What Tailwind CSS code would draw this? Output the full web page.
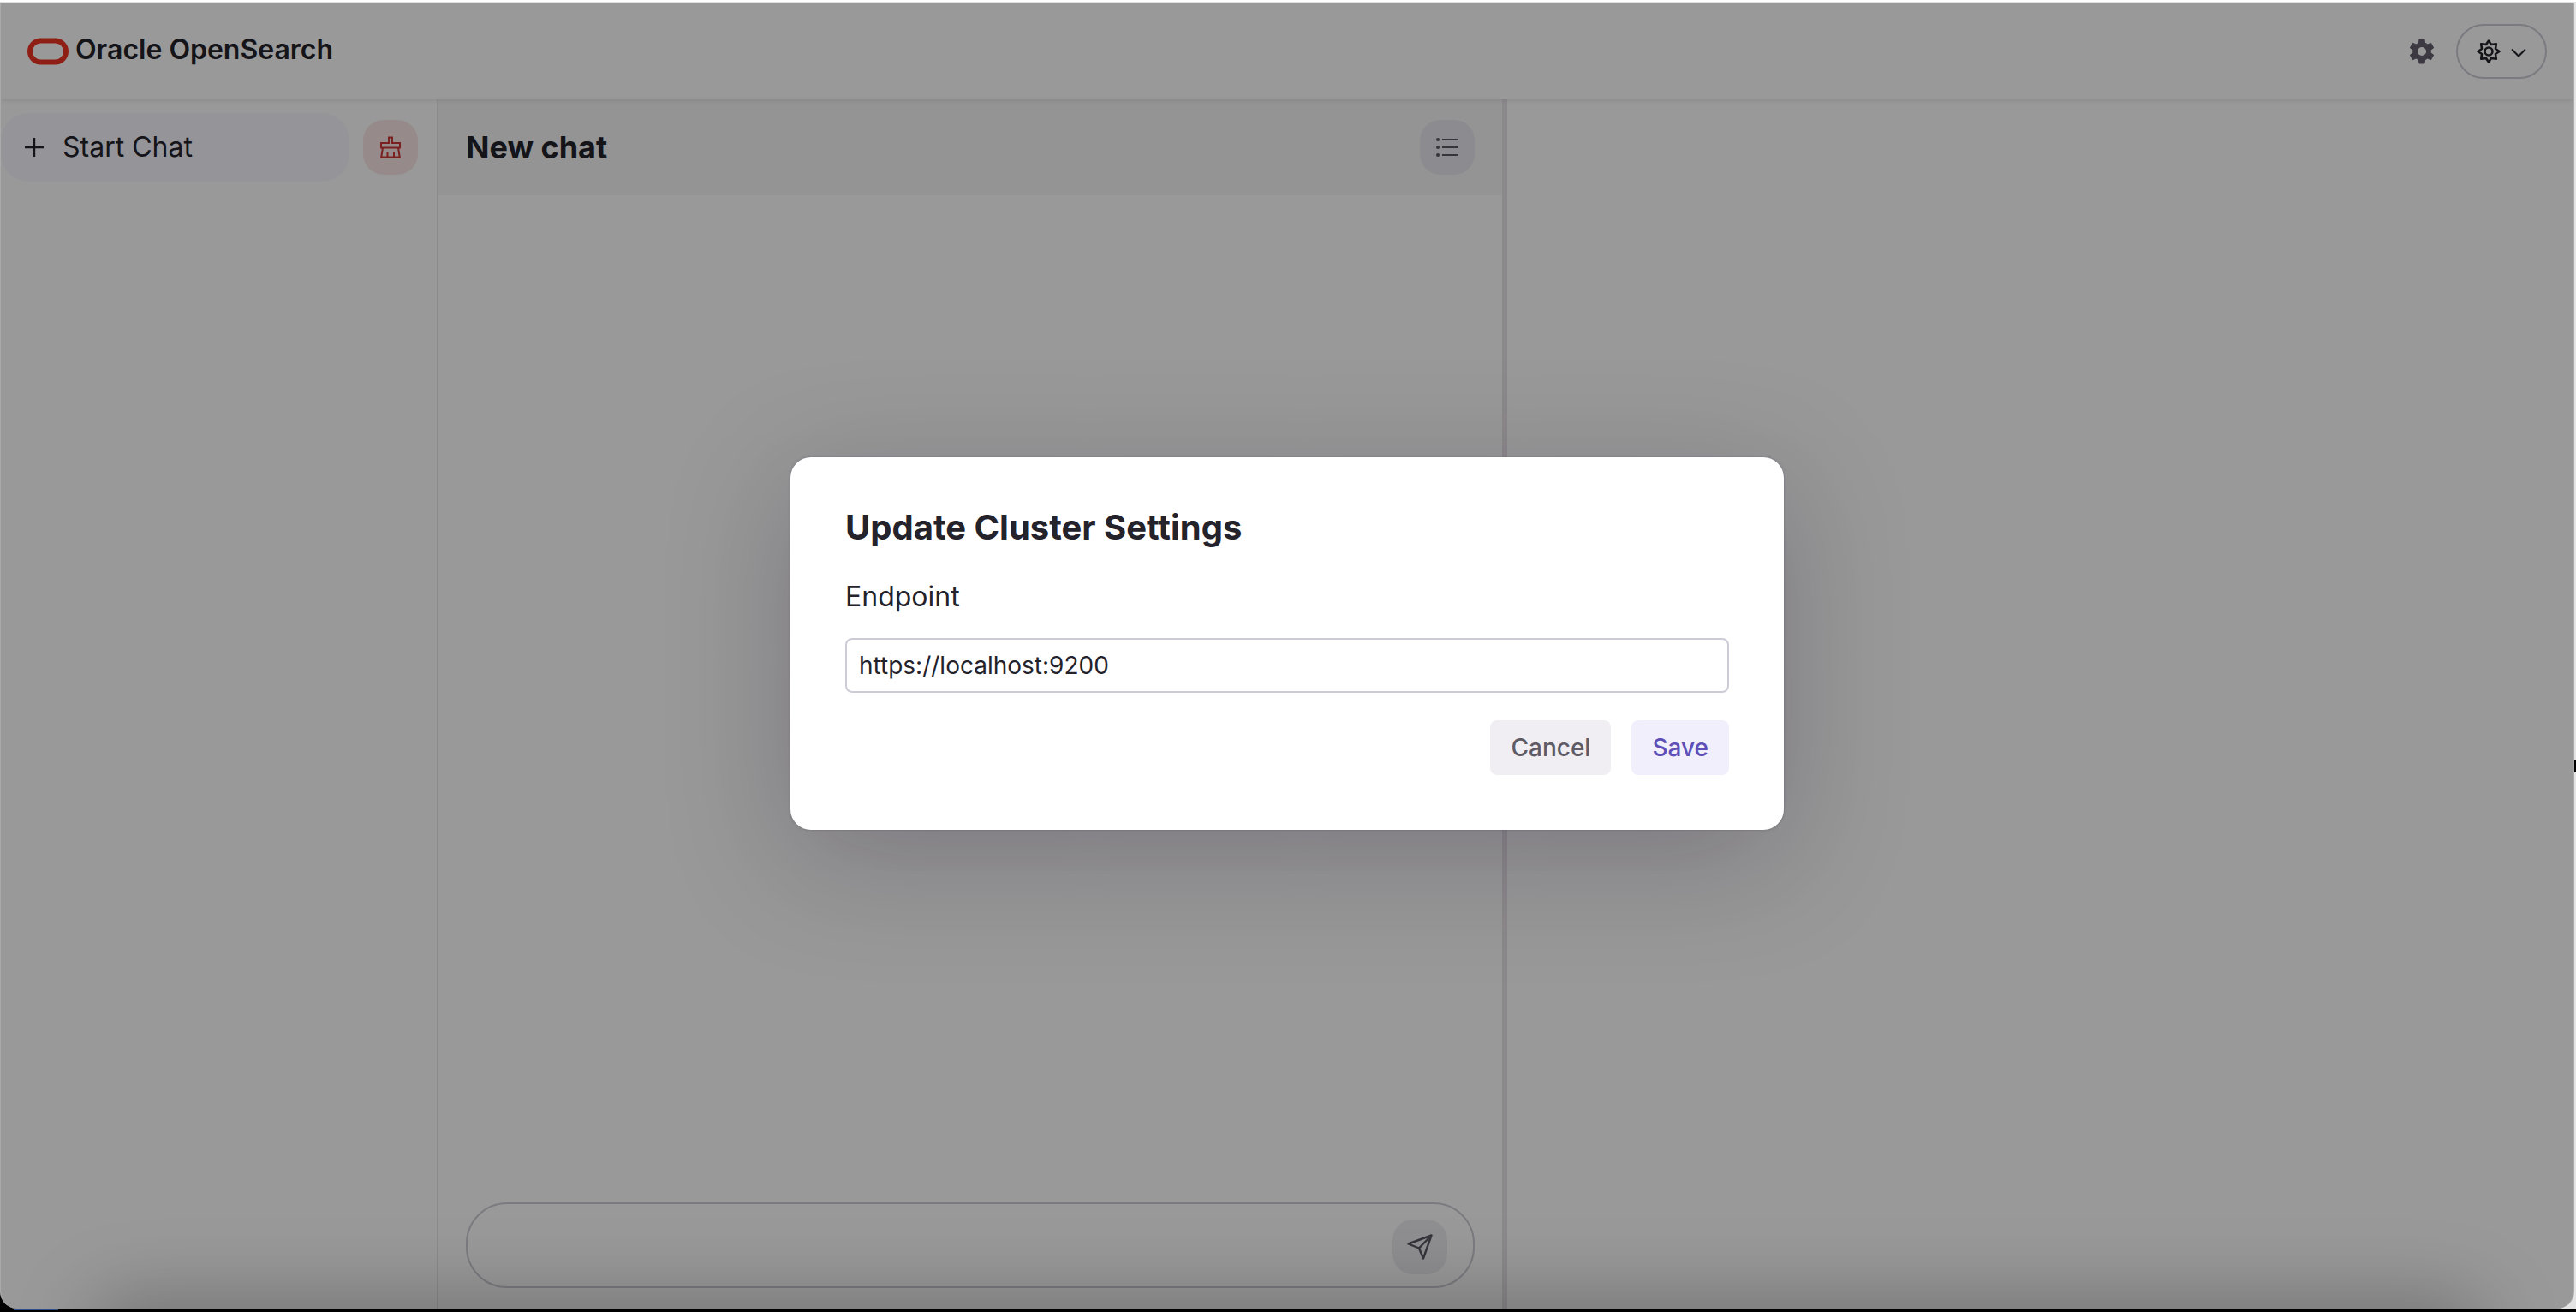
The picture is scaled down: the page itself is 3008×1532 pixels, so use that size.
<!DOCTYPE html>
<html lang="en">
<head>
<meta charset="utf-8">
<title>Oracle OpenSearch</title>
<script src="https://cdn.jsdelivr.net/npm/@tailwindcss/browser@4"></script>
</head>
<body class="bg-black font-['Inter',sans-serif] text-[#24222b]">
<div class="relative flex h-screen flex-col overflow-hidden">
  <div class="h-1 shrink-0 border-b-2 border-[#e0e0e0] bg-white"></div>

  <div class="flex min-h-0 flex-1 bg-[linear-gradient(to_right,#000_50%,#e4e4e4_50%)]">
    <div class="relative mr-[2px] flex min-w-0 flex-1 flex-col overflow-hidden rounded-b-[20px] border-r border-l border-[#aaaaaa] bg-white">
      <header class="relative z-10 flex h-28 shrink-0 items-center justify-between bg-white px-[31px] shadow-[0_1px_6px_rgba(0,0,0,0.1)]">
        <div class="flex items-center gap-2">
          <svg class="h-8 w-12" viewBox="0 0 48 32" fill="none" stroke="#ee3424" stroke-width="6" aria-hidden="true"><rect x="3" y="3.500" width="42" height="25" rx="12.500"/></svg>
          <h1 class="pb-1 text-[32px] leading-10 font-semibold">Oracle OpenSearch</h1>
        </div>
        <div class="flex items-center gap-6">
          <button class="flex h-8 w-8 items-center justify-center text-[#665f6e]" aria-label="Cluster settings">
            <svg class="h-9 w-9 shrink-0" viewBox="0 0 24 24" fill="currentColor"><path d="M19.140 12.940c.04-.3.06-.61.06-.94 0-.32-.02-.64-.07-.94l2.030-1.580a.49.49 0 0 0 .12-.61l-1.920-3.320a.49.49 0 0 0-.59-.22l-2.390.96a7 7 0 0 0-1.620-.94l-.36-2.540a.48.48 0 0 0-.48-.41h-3.840a.47.47 0 0 0-.47.41l-.36 2.540c-.59.24-1.130.57-1.620.94l-2.390-.96a.48.48 0 0 0-.59.22L2.740 8.870a.47.47 0 0 0 .12.61l2.030 1.580c-.05.3-.09.63-.09.94s.02.64.07.94l-2.030 1.580a.49.49 0 0 0-.12.61l1.920 3.320c.12.22.37.29.59.22l2.390-.96c.5.38 1.030.7 1.620.94l.36 2.540c.05.24.24.41.48.41h3.840c.24 0 .44-.17.47-.41l.36-2.540c.59-.24 1.130-.56 1.620-.94l2.390.96c.22.08.47 0 .59-.22l1.920-3.320a.47.47 0 0 0-.12-.61zM12 15.400a3.400 3.400 0 1 1 0-6.800 3.400 3.400 0 0 1 0 6.800"/></svg>
          </button>
          <button class="flex h-16 items-center gap-3 rounded-full border-2 border-[#cdccd5] px-[22px] text-[#24222b]" aria-label="Preferences">
            <svg class="h-7 w-7" viewBox="0 0 28 28" fill="none" stroke="currentColor" stroke-width="2.600" stroke-linejoin="round"><path d="M14 1.500 17 6 22.800 5.200 22 11 26.500 14 22 17 22.800 22.800 17 22 14 26.500 11 22 5.200 22.800 6 17 1.500 14 6 11 5.200 5.200 11 6Z"/><circle cx="14" cy="14" r="4.500"/></svg>
            <svg class="h-[18px] w-[18px]" viewBox="0 0 18 18" fill="none" stroke="currentColor" stroke-width="2"><path d="M1 6.500 9 14.500 17 6.500"/></svg>
          </button>
        </div>
      </header>

      <div class="flex min-h-0 flex-1">
        <aside class="w-[511px] shrink-0 border-r-2 border-[#e8e8e8]">
          <div class="flex items-center gap-4 pt-4">
            <button class="flex h-20 w-[407px] items-center gap-[22px] rounded-[32px] bg-[#f8f7ff] pl-7 text-[32px] leading-10">
              <svg class="h-[22px] w-[22px]" viewBox="0 0 22 22" fill="none" stroke="currentColor" stroke-width="2.400" aria-hidden="true"><path d="M11 0V22M0 11H22"/></svg>
              Start Chat
            </button>
            <button class="flex h-16 w-16 items-center justify-center rounded-3xl bg-[#fae8e6] text-[#cb3636]" aria-label="Clear chats">
              <svg class="h-[26px] w-6" viewBox="0 0 24 26" fill="none" stroke="currentColor" stroke-width="2"><path d="M10 8V1.500H14V8H23V13.500H1V8ZM10 8H1M3 13.500 1.200 24.500H22.800L21 13.500M8.500 24V18.500M16 24V18.500"/></svg>
            </button>
          </div>
        </aside>

        <main class="flex min-w-0 flex-1 flex-col">
          <div class="flex h-28 shrink-0 items-center justify-between bg-[#f7f7f7] px-8">
            <h2 class="text-[36px] leading-10 font-bold">New chat</h2>
            <button class="flex h-16 w-16 items-center justify-center rounded-3xl bg-[#e9e8f0] text-[#5a5762]" aria-label="Chat list">
              <svg class="h-[26px] w-[26px]" viewBox="0 0 26 26" fill="currentColor"><circle cx="2" cy="4" r="2"/><circle cx="2" cy="13" r="2"/><circle cx="2" cy="22" r="2"/><path d="M7 3H26V5H7ZM7 12H26V14H7ZM7 21H26V23H7Z"/></svg>
            </button>
          </div>
          <div class="flex-1"></div>
          <form class="mx-8 mb-6 flex h-[100px] items-center rounded-[48px] border-2 border-[#cdccd5] pr-[30px] pl-8">
            <input type="text" aria-label="Message" class="min-w-0 flex-1 bg-transparent text-[28px] outline-none">
            <button type="button" class="mt-1 flex h-16 w-16 items-center justify-center rounded-3xl bg-[#eeeef3] text-[#5a5762]" aria-label="Send">
              <svg class="h-8 w-8" viewBox="0 0 32 32" fill="none" stroke="currentColor" stroke-width="2.400" stroke-linejoin="round"><path d="M29.500 2.500 2.500 12.500 15 17.500 20 29.500ZM29.500 2.500 15 17.500"/></svg>
            </button>
          </form>
        </main>

        <div class="w-[6px] shrink-0 bg-[#e9e4e9]"></div>
        <section class="w-[41.450%] shrink-0" aria-label="Results"></section>
      </div>

      <!-- Shade along the lower edge -->
      <div class="pointer-events-none absolute inset-x-28 -bottom-20 z-20 h-20 rounded-[80px] shadow-[0_0_90px_12px_rgba(0,0,0,0.26)]"></div>

      <!-- Modal -->
      <div class="absolute inset-0 z-30 flex items-center justify-center bg-black/40 pb-[29px]">
        <div role="dialog" aria-labelledby="dialog-title" class="w-[1160px] max-w-full rounded-3xl bg-white p-16 shadow-[0_0_3px_rgba(90,80,100,0.5),0_32px_140px_rgba(35,25,45,0.26)]">
          <h2 id="dialog-title" class="text-[40px] leading-9 font-bold">Update Cluster Settings</h2>
          <label for="endpoint" class="mt-[47px] block text-[32px] leading-8">Endpoint</label>
          <input id="endpoint" type="text" value="https://localhost:9200" class="mt-8 block h-16 w-full rounded-lg border-2 border-[#cdccd6] px-[14px] text-[28px] outline-none">
          <div class="mt-8 flex justify-end gap-6 text-[28px] leading-8 font-medium">
            <button class="h-16 rounded-lg bg-[#f0eef3] px-6 text-[#5f5b66]">Cancel</button>
            <button class="h-16 rounded-lg bg-[#f1effc] px-6 text-[#5e4fb8]">Save</button>
          </div>
        </div>
      </div>
    </div>
  </div>

  <div class="flex h-1 shrink-0 bg-black"><div class="ml-4 h-[2px] w-[52px] bg-[#2c4f86]"></div></div>
  <!-- Edge of the window behind -->
  <div class="absolute top-[888px] right-0 h-[14px] w-[2px] bg-black"></div>
</div>
</body>
</html>
